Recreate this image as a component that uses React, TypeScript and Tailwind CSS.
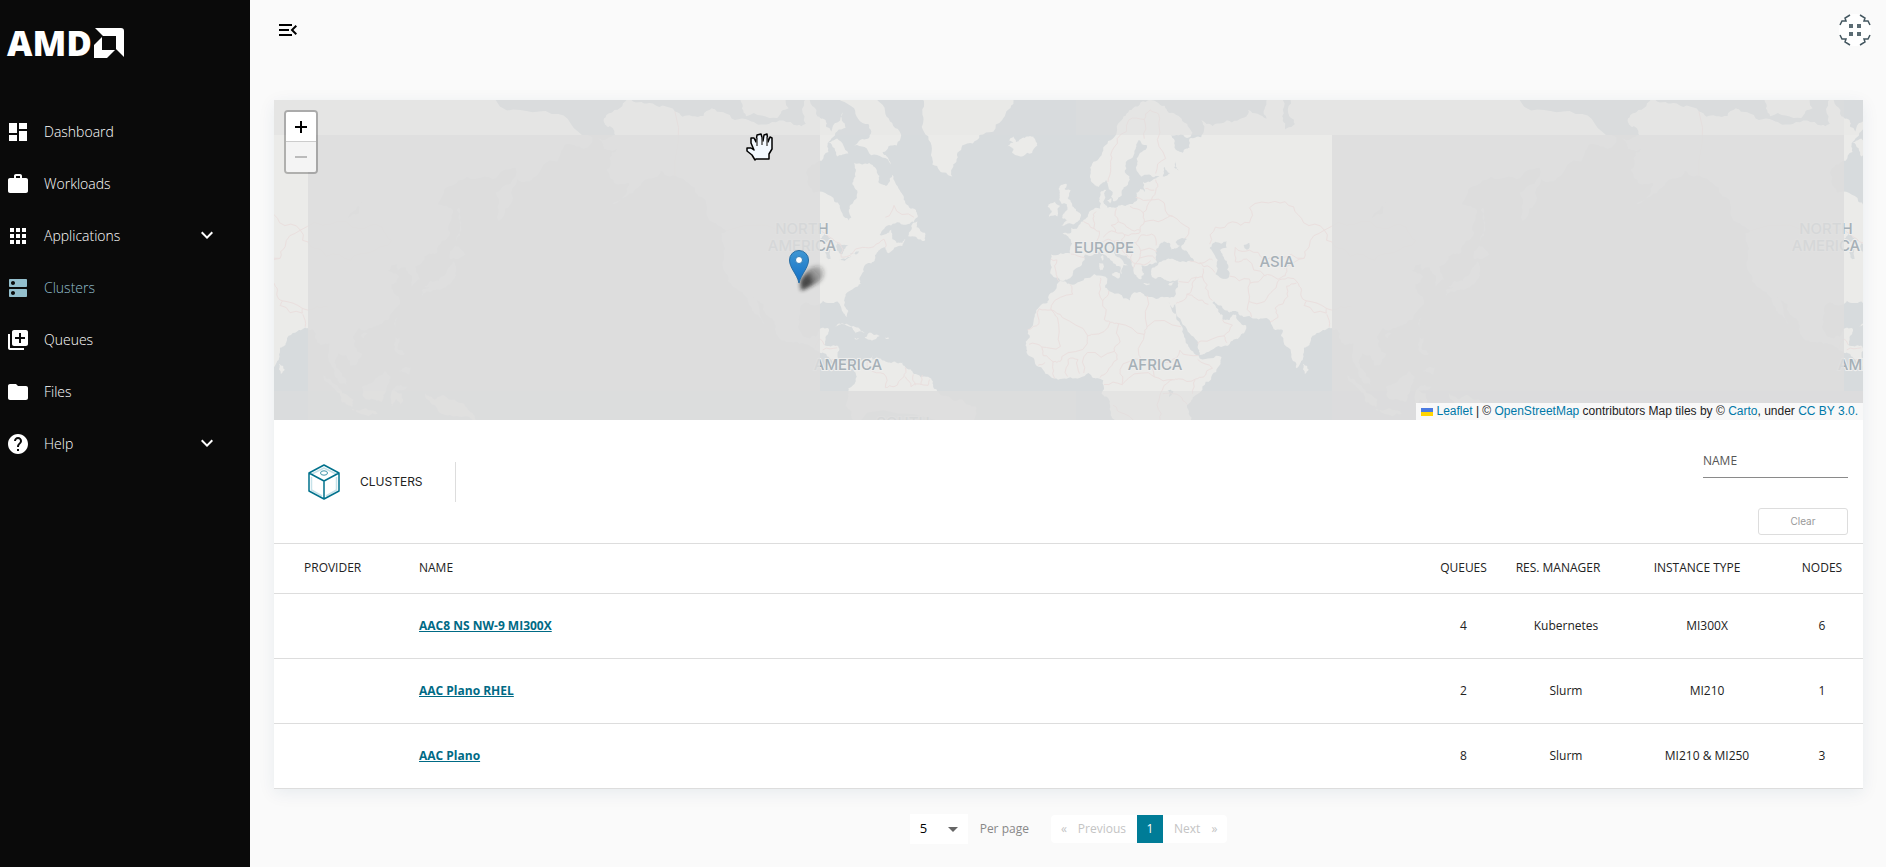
import React, { useState } from 'react';
import { MdApps, MdDashboard, MdDns, MdExpandMore, MdFolder, MdHelp, MdLibraryAdd, MdMenuOpen, MdWork } from 'react-icons/md';

type Point = [number, number];

interface NavItem {
  label: string;
  icon: React.ElementType;
  expandable?: boolean;
}

interface Cluster {
  name: string;
  queues: number;
  manager: string;
  instance: string;
  nodes: number;
}

const navItems: NavItem[] = [
  { label: 'Dashboard', icon: MdDashboard },
  { label: 'Workloads', icon: MdWork },
  { label: 'Applications', icon: MdApps, expandable: true },
  { label: 'Clusters', icon: MdDns },
  { label: 'Queues', icon: MdLibraryAdd },
  { label: 'Files', icon: MdFolder },
  { label: 'Help', icon: MdHelp, expandable: true },
];

const clusters: Cluster[] = [
  { name: 'AAC8 NS NW-9 MI300X', queues: 4, manager: 'Kubernetes', instance: 'MI300X', nodes: 6 },
  { name: 'AAC Plano RHEL', queues: 2, manager: 'Slurm', instance: 'MI210', nodes: 1 },
  { name: 'AAC Plano', queues: 8, manager: 'Slurm', instance: 'MI210 & MI250', nodes: 3 },
];

// Coastlines as "lon,lat lon,lat ..."
const land = [
  // the Americas
  '-168,66 -162,66.5 -163,67.5 -166,68.3 -163,69.5 -157,71.3 -150,70.6 -141,69.6 -135,69 -128,70 -124,69.5 -115,68.5 -108,68 -98,67.8 -95,68 -94,71.5 -91,69 -88,68.5 -86,67 -82,69.5 -81,67.5 -86,66 -87,64 -93,62 -94.5,59 -92.5,57 -85,55.3 -82.3,53 -80,51.3 -79,52 -79.5,54.5 -77,56 -78.5,58.5 -77.5,60 -78,62.3 -74,62.2 -70,61 -69.5,59 -67,58.3 -65.5,59.5 -64.5,60.3 -62,57.5 -60,55 -57,53.8 -55.7,52 -59,50.5 -65,50.2 -69,48 -65,49.2 -64.5,47 -61,46 -60,47 -61,45.3 -65.8,43.5 -67,45 -70,43.7 -70.7,42 -74,40.6 -76,37 -75.7,35.3 -78,34 -81,31.7 -81.3,30 -80,27 -80.4,25.2 -81.8,26.5 -82.7,28.5 -84,30 -89,30.2 -90,29.2 -94,29.6 -97,28 -97.5,25 -97.8,22 -96,19 -94,18.2 -91.5,18.7 -90.4,21 -87,21.5 -88,18 -88.5,16 -84,15.8 -83.3,14 -83.7,11 -82,9 -79.5,9.5 -77.5,8.5 -75.5,10.7 -73,11.3 -71.5,12.3 -71.5,10.9 -68,10.7 -64,10.3 -61,10 -60,8.4 -57,6 -52,5 -50,1 -48,-1 -44,-2.6 -40,-3 -35.2,-5.5 -35,-8 -37,-12 -77,-12 -79,-7 -81,-5 -80,-2 -80,1 -77.5,4 -78,8 -80,7.3 -83,8.3 -86,11 -88,13 -92,14.5 -94.5,16.2 -100,17 -105.5,20 -105.5,22.5 -109,26 -113,31 -114.7,31.5 -111,25.5 -109.5,23 -112,26 -115,29 -117,32.5 -120.6,34.5 -122.5,37.8 -124.3,40.4 -124,46 -124.6,48.3 -123,49 -128,51 -130,55 -134,58 -139,59.7 -146,61 -151,59.5 -154,58 -158,56.3 -163,54.8 -158,57.8 -157,58.8 -162,58.7 -165,61 -164,63 -161,64.5 -166,64.5',
  // Europe and Asia
  '-9,38.7 -8.8,43.2 -2,43.5 -1.3,46 -2.5,47.3 -4.7,48.3 -1.6,48.7 -1.6,49.7 0,49.4 1.7,50.9 4,52 5,53.3 8.5,53.8 8.2,56 8.5,57 10.6,57.6 10.3,56 9.8,54.8 11,54 14,54 18.5,54.7 21,55.3 21.2,57 22.6,57.7 24.3,57.2 23.6,59 28,59.6 30,60 25,60.3 22.8,60 21.3,61 21.3,63 25,65 22,65.8 21,64.5 17.5,62 17.2,60.7 18.8,60 16.7,58 16.2,56.5 14.3,55.5 13,55.4 11.2,58.5 10.5,59.3 8,58.1 5.6,58.9 5,61.5 9,63.5 13,66 16,68.5 20,70 26,71 31,70.3 33,69.4 38,68.2 41,66.8 39,66.1 33,66.6 35,64.4 37.5,63.9 40,64.7 40,66 44,66.2 44,68.5 48,67.7 53,68.5 60,69 60.5,69.8 67,68.7 67,71 70,73 73,72 72.5,69 74,67 72.5,66.3 77,68 75,69 75,72 80,72.5 87,75 105,78 113,74 130,71 140,72.5 160,69.7 178,69.3 190,66.2 187,64.5 180,65 177.5,62.5 170,60 163.5,59.5 162,56 157,51.2 156,57 163,61.5 155,59.5 143,59.3 135.5,54.7 141,53 140,48.5 135.5,44 131,42.8 127.7,40 129.4,36.5 126.5,34.5 126.5,37.5 124.5,39.8 121.5,39 121.5,40.7 118,39 122,37.2 119.3,35 121.8,31.5 121.5,28.5 118.5,24.5 114,22.4 110.3,21 108,21.6 105.8,19 109,13 106.5,9 105,8.8 105,10.5 100.8,13.2 99.3,10 103.4,4 104,1.4 101,3 98.4,8.5 97.6,16.5 94.5,16 92,21 89,21.8 86.8,21 82.3,16.7 80.2,15 80,12 77.5,8 76,11 73,17 72.7,21 70,21 69,22.3 67,24.8 61.5,25.1 57,26.8 54,26.6 51,28.8 48.5,30 48,29.5 50.3,26.5 51.5,25.8 51.6,24.3 54,24.2 56.3,26 57,24 59.8,22.4 58,19.5 55,17.3 52,15.6 45,12.8 43.4,12.7 42.8,15.5 39,21.3 35,28.2 34.7,29.4 34.3,31.2 36,35.5 36,36.7 32,36.1 30.5,36.8 27.5,36.8 26.5,39.3 29,41 33,42 36,41.4 41.5,41.5 39,44 37,45.3 39,47 35,46.3 36.5,45.3 33.5,44.5 33,46 31,46.5 29,45 28,42.5 28.5,41.2 26,40.8 23,40.3 24,38 22.8,36.5 21.3,37.5 19.5,40.5 19,42 14,45 12.3,45.3 13.5,43.5 18.4,40.1 16.8,40.5 16,38 15.7,40 11,42.4 9,44.4 6,43.1 3.2,43.2 3,41.8 -0.3,39.4 -2,36.8 -5.5,36.1 -6.5,37',
  // Africa
  '-6,35.8 -2,35.1 3,36.8 10,37.3 11,36.8 10.2,34.2 15,32.4 19,30.3 20,32.5 23,32.6 29,30.9 34.3,31.3 34.8,29.5 34,27.9 32.6,29.9 33.5,27.8 35.7,24 37.3,20.5 39.5,15.5 43.2,12.3 43.5,11.3 51.2,11.9 50.8,9.5 47.5,4 42,-1.5 39,-5 40.5,-11 40,-14 13,-14 13.5,-10 12,-5 9,-1 9.6,3.8 7,4.4 4.4,6.3 -2,4.8 -7.7,4.4 -13.2,8.5 -16.8,12.5 -17.4,14.7 -16.2,19 -17,21 -14.5,26 -10,29.5 -9.7,31.5 -6.8,34',
  // Greenland, Iceland, Britain, Ireland
  '-73,78 -55,72 -54,69.5 -53.5,67 -51,63.5 -48,61 -43.5,60 -42,62.5 -40,65 -34,66.5 -26,68.5 -22,70.5 -22,78',
  '-24,65.6 -22,66.3 -21,65.5 -18,66.1 -15,66.3 -13.6,65 -18.5,63.4 -22.5,63.9 -22,64.5 -24,64.9 -22,65.4',
  '-5.5,50 -3,51.3 -5,51.8 -4.3,52.8 -3,53.6 -3.2,54.8 -5,54.8 -5.7,56.5 -5.8,58 -3.2,58.6 -4,57.7 -1.9,57.5 -3,56 -1.5,55 0,53.3 1.6,52.7 1,51.3 -3.5,50.4',
  '-10,51.8 -8.5,53.3 -10,54.2 -7.3,55.3 -5.7,54.5 -6.4,52.2',
  // Canadian islands
  '-59,47.7 -57.3,50.8 -55.5,51.5 -56,49.8 -53,48.5 -53,46.8 -55.5,47',
  '-65,62 -72,63.5 -78,65 -73,66 -73,68 -78,70 -88,71 -89,74 -80,74 -72,71.5 -67,69.3 -62,67 -63,65 -68,64 -66,63',
  '-116,69 -105,68.8 -101,70 -105,73 -115,73.3 -118,71',
  '-125,71.5 -119,71.5 -117,74 -125,74',
  '-87,65.5 -84,66 -80,63.8 -84,63.3',
  // Caribbean
  '-84.8,22 -82,23.1 -77,21.8 -74.3,20.2 -77.5,19.9 -78.5,21.5',
  '-74.3,18.5 -73,19.9 -69,19 -71,17.8',
  '-78,18.4 -76.3,18.1 -77.5,17.8',
  '-67.2,18.4 -65.7,18.3 -66.5,18',
  // Mediterranean
  '8.5,39 8.3,41 9.6,40.8 9.5,39.2', '8.7,42.5 9.4,43 9.3,41.5', '12.5,38 15.5,38.2 15.1,36.8', '23.7,35.5 26.2,35.2 24.5,34.9', '32.4,35 34.4,35.6 33.5,34.7', '11,55.6 12.5,55.9 12,54.9',
  // Asia and Pacific
  '79.8,9.5 81.8,7.5 80.5,6 79.8,7.5',
  '130,31.5 130,33.5 133,34.2 131,34.5 136,36 137,37.3 140,40 141,41.4 142,39.5 140.7,36 139,34.7 136,33.6 134,33.5',
  '140,42 141.7,45.4 145.3,43.3 141,42.3',
  '142,46.5 142.3,53.5 143.2,54 143.5,49.5',
  '95.3,5.5 98,4 104,-1.5 106,-3 105.6,-5.8 102,-4 98.5,1.5',
  '109,1.5 113,3.2 117,7 119,5 117.5,0.8 116,-3.8 111,-3',
  '105.3,-6.5 108.5,-6.7 112.5,-6.8 114.5,-8 108,-7.8',
  '119.5,-5.5 119,-2.5 120.5,1 125,1.5 120.5,0.3 123,-0.9 122.5,-4.7 121,-2.8',
  '120.2,16 120.7,18.4 122.2,18.2 121.5,14.5 124,13 123.8,12.7 120.6,14',
  '122,7 124.5,8.5 126.3,8.3 125.5,5.8',
  '131,-0.8 134.5,-3 138,-1.7 145,-4.5 148,-8 150.5,-10.5 143,-9 138,-8.3 133,-4',
  '121.5,25 120.2,23 120.9,22', '108.7,19.2 110.8,20 109.5,18.3',
];

const lakes = [
  '47,44.8 49,46.4 53,46.5 53,45 50.5,44.4 53,41.5 53.8,37 51,36.8 49,38 49.5,40.5',
  '59,45.5 61,46 60,44.2',
  '-92,46.8 -88,48.8 -84.8,46.7', '-87.8,42.5 -87,45.5 -85.3,45.5 -86.3,42', '-84,46 -80,45.5 -82.3,43.2 -83.5,44', '-83.3,41.7 -79,42.8 -81.5,41.5', '-79.5,43.3 -76.3,44 -77,43.3',
  '30.5,60 31,61.6 33,60.5', '34.5,61.5 35,62.5 36,61', '32,0.3 34.3,0 33,-2.5', '104,51.5 109.5,55.5 108,53',
];

const borders = [
  '-5.8,36 -7,38.5 -6.7,41.8 -8.8,42', '-1.8,43.3 3.1,42.4', '7.5,43.8 7,45.9 8.2,48.9 6.2,49.5 2.6,51.1', '7,45.9 10.5,46.8 13.7,46.5 13.5,45.6',
  '6.2,49.5 6,51.8 7,53.2', '14.2,53.9 14.9,51 12.3,50.2 13.8,48.7 9.6,47.5', '14.9,51 18.8,49.5 22.6,49.1 24,51 23.6,53 19,54.3', '13.8,48.7 17,48.1 22.2,48.4 22.6,49.1',
  '17,48.1 16,46.8 18.8,45.9 21,46.2 22.9,48 26.6,48.2 28.2,45.5', '21,46.2 22.7,44.2 28.5,43.8', '22.7,44.2 22.4,42.3 28,42', '22.4,42.3 21,40.8 26.3,41.6', '13.7,46.5 16,46.3 19,44.9 19.2,42.5 21,40.8 20,39.7', '15.8,45.2 18.5,42.5',
  '24,51 30.5,51.4 34,52.2 39.8,49.6 38.3,47.2', '23.6,53 26.5,55.6 31,55 31.5,53.3 34,52.2', '21,56.1 26.5,55.6 28.2,57.8 28,59.4', '24.4,57.8 27.5,57.5',
  '11.2,59 12.2,61.5 12.2,63.6 14.5,66 18.5,68.5 24,68.6 26,69.8 29,69.3', '24,66 24,68.6', '28,60.5 31.5,63 29.5,66.8 29,69.3',
  '47,45.8 49,49.8 55,51 61,50.8 61,54 70,55.3 76.5,54.2 80,50.8 87.3,49.1', '87.3,49.1 82,45.2 80.2,42.2 74,40 73.5,37.5 71,36.5 66,37.5 61.2,35.5 61,36.6 54,37.4',
  '56,41.3 56,45 61,44.3 66,42 71,42.5 80.2,42.2', '56,41.3 60,42 66.5,37.4', '67,41 70.5,40.2 73.5,39.5', '61.2,35.5 60.8,30 61.7,25.2', '60.8,30 66.3,30 69.5,33.5 71.5,36.4 75.5,36.8 78.5,34.5 79,32 81,30.2 88,27.9 92,27.8 97,28.3',
  '68.2,23.7 71,25 70,28 74.5,31.5 74,34.5 77.5,35.4', '81,30.2 80.2,28.8 88,26.4 88,27.9', '88.2,26 89,22', '87.3,49.1 91,45.2 96.5,42.7 105,41.7 111.5,43.6 119.5,46.7 116,49.8 108,49.5 98,50.5 87.3,49.1',
  '43.5,41.2 45,40 48.8,38.4', '44.7,39.5 44.5,37.1 46,35 45.5,34 48,30.3', '36.1,35.9 42.3,37.1 44.5,37.1', '42.3,37.1 41,34.4 39,32.2 42,31 46.5,29.1', '39,32.2 37,30 35.2,29.4', '51.5,24.3 55,22.6 52,19 44,17.3 42.8,16.4', '52,19 53,16.7', '40,41.5 46.5,41.8 48,41.8',
  '-2,35 -1.2,32.2 -8.7,28.7 -8.7,27.4 -4.8,25 4,19.2 6,19.5 12,23.5 10,24.5 9.4,30.2 8.3,35 8.6,36.9', '9.4,30.2 11.5,33.1', '12,23.5 15,23 24,19.5 25,22 25,31.7', '25,22 37,22', '-8.7,27.4 -13,27.7', '-13,27.7 -13,23 -17,21',
  '-8.7,27.4 -6.5,25 -5.5,15.5 -12,15.3 -16.5,16.2', '4,19.2 4,16.5 -5,12 -5.5,10.4 -8,10.2 -11.5,12.3 -12,15.3', '15,23 15.5,17 13.5,13.8 4,13.4 2.7,6.3', '-3,5.1 -2.8,11 0.7,11 1.2,6.1', '-7.5,4.4 -8.2,8 -8,10.2', '-13.3,9 -11,10', '13.5,13.8 14.5,11 11,6.7 8.5,4.7', '24,19.5 22,13 22.8,11 15.5,7.5 16.2,2.2', '22.8,11 27.5,5 34,4 36,4.3 42,4.2 45,5 48,8 42.8,11', '24,9 33,10 36.5,14.2 43,12.4', '9.8,2.3 16.2,2.2 18.5,4.5 27.5,5', '34,4 31,2 29.5,-1.5 30,-8 28.7,-12', '30.5,-1 34,-1 37.7,-3.5 39.2,-4.7', '41.9,4 41,-1', '13,-5 17,-8 24,-11',
  '-73,11.2 -72.5,7.5 -67.5,6 -67,1.2 -64,1.5 -60.5,5 -60,8.2', '-60,5 -58,1.5 -52,2 -51.5,4', '-57.2,5.8 -56.5,2', '-54,5.6 -54.5,2.3', '-95,49 -88,48.2 -83,46 -82.5,42.5 -79,43.2 -75,45 -71,45.2 -67.5,47 -67,45', '-123,49 -95,49', '-141,60 -141,69.6', '-67,52 -64,54.5 -57,52', '-88.5,16 -90.5,17.8 -92,14.6', '-89,14.3 -84,15', '-85.7,11 -83.7,11',
];

const parse = (s: string): Point[] => s.split(' ').map((p) => p.split(',').map(Number) as Point);

// Web mercator, one world is 1024 wide at zoom 2
const project = ([lon, lat]: Point): Point => [
  802 + (lon * 1024) / 360,
  291 - (512 / Math.PI) * Math.log(Math.tan(Math.PI / 4 + (lat * Math.PI) / 360)),
];

const roughen = (points: Point[], passes: number): Point[] => {
  let pts = points;
  for (let n = 0; n < passes; n++) {
    const next: Point[] = [];
    for (let i = 0; i < pts.length - 1; i++) {
      const [ax, ay] = pts[i];
      const [bx, by] = pts[i + 1];
      const h = Math.sin(ax * 12.9 + by * 78.2) * 437.5;
      const k = (h - Math.floor(h) - 0.5) * 0.4;
      next.push(pts[i], [(ax + bx) / 2 + (by - ay) * k, (ay + by) / 2 - (bx - ax) * k]);
    }
    next.push(pts[pts.length - 1]);
    pts = next;
  }
  return pts;
};

const toPath = (s: string, closed: boolean) => {
  const base = parse(s).map(project);
  const pts = roughen(closed ? [...base, base[0]] : base, closed ? 3 : 2);
  return 'M' + pts.map(([x, y]) => `${x.toFixed(1)} ${y.toFixed(1)}`).join('L') + (closed ? 'Z' : '');
};

const landPath = land.map((s) => toPath(s, true)).join('');
const lakePath = lakes.map((s) => toPath(s, true)).join('');
const borderPath = borders.map((s) => toPath(s, false)).join('');

const labels = [
  { text: 'NORTH', x: 528, y: 134 },
  { text: 'AMERICA', x: 528, y: 151 },
  { text: 'AMERICA', x: 574, y: 270 },
  { text: 'SOUTH', x: 629, y: 328 },
  { text: 'EUROPE', x: 830, y: 153 },
  { text: 'ASIA', x: 1003, y: 167 },
  { text: 'AFRICA', x: 881, y: 270 },
];

// Tiles that are still fading in: x, y, width, height, opacity
const fadingTiles = [
  [0, 0, 546, 35, 0.42],
  [546, 0, 256, 35, 0.15],
  [802, 0, 768, 35, 0.42],
  [1570, 0, 19, 35, 0.15],
  [34, 35, 512, 256, 0.86],
  [1058, 35, 512, 256, 0.86],
  [0, 291, 34, 29, 0.5],
  [34, 291, 256, 29, 0.82],
  [290, 291, 512, 29, 0.88],
  [802, 291, 256, 29, 0.5],
  [1058, 291, 531, 29, 0.84],
];

const WorldMap = () => (
  <svg className="block w-full h-full" viewBox="0 0 1589 320" preserveAspectRatio="xMidYMid slice" aria-label="World map">
    <defs>
      <g id="world">
        <path d={landPath} fill="#ebebe9" />
        <path d={lakePath} fill="#d7dbdd" />
        <path d={borderPath} fill="none" stroke="#eadfde" strokeWidth="1" />
        {labels.map((l, i) => (
          <text key={i} x={l.x} y={l.y} textAnchor="middle" className="font-['Inter',sans-serif] text-[15px] font-medium" fill="#a6b0b7" stroke="#eeeeed" strokeWidth="2" paintOrder="stroke">
            {l.text}
          </text>
        ))}
      </g>
      <linearGradient id="pin" x1="0" y1="0" x2="0" y2="1">
        <stop offset="0" stopColor="#3f97d3" />
        <stop offset="1" stopColor="#126fc6" />
      </linearGradient>
      <linearGradient id="shade" x1="0" y1="1" x2="1" y2="0">
        <stop offset="0" stopColor="#222" stopOpacity="0.85" />
        <stop offset="1" stopColor="#222" stopOpacity="0.15" />
      </linearGradient>
      <filter id="soft" x="-50%" y="-50%" width="200%" height="200%"><feGaussianBlur stdDeviation="2" /></filter>
    </defs>
    <rect width="1589" height="320" fill="#d7dbdd" />
    <use href="#world" x="-1024" />
    <use href="#world" />
    <use href="#world" x="1024" />
    {fadingTiles.map(([x, y, w, h, o]) => (
      <rect key={`${x}-${y}`} x={x} y={y} width={w} height={h} fill="#dddddd" opacity={o} />
    ))}

    {/* Cluster marker */}
    <path d="M527 190L528 179C531 171 538 165 546 166C552 169 551 178 543 183Z" fill="url(#shade)" filter="url(#soft)" />
    <path d="M528 190L526 180L536 173L538 184Z" fill="#333" opacity="0.6" filter="url(#soft)" />
    <path d="M525 183C523 174 515.5 168 515.5 160A9.5 9.5 0 0 1 534.5 160C534.5 168 527 174 525 183Z" fill="url(#pin)" stroke="#2a6fa5" />
    <circle cx="525" cy="160" r="3.5" fill="#fff" stroke="#2f7cb5" />

    {/* Drag hand */}
    <path d="M481 60L478 55L473 51V48H477L480 50L477 43V38H480L482 42L483 35L487 34L489 41L490 35L493 34L494 42L496 37L498 38V49L495 54V59H482Z" fill="#f3f9ff" stroke="#000" strokeWidth="1.5" strokeLinejoin="round" />
    <path d="M483 38V46M488 37V45M493 37V46" stroke="#555" strokeWidth="1.5" fill="none" />
  </svg>
);

const Logo = () => (
  <div className="flex items-center text-white h-[30px]">
    <span className="font-['Open_Sans',sans-serif] font-extrabold text-[35px] leading-[30px]">AMD</span>
    <svg className="ml-0.5 size-[30px]" viewBox="0 0 30 30" fill="currentColor">
      <path d="M1 0H27Q30 0 30 3V29L22 21V8H9Z" />
      <path d="M8 9V22H21L13 30H0V17Z" />
    </svg>
  </div>
);

const Sidebar = () => (
  <aside className="w-[250px] shrink-0 bg-[#0a0a0a] pt-7">
    <div className="pl-[7px]"><Logo /></div>
    <nav className="mt-12">
      {navItems.map(({ label, icon: Icon, expandable }) => (
        <a key={label} href="#" className={`flex items-center h-[52px] pl-1.5 pr-[31px] text-[14px] font-light ${label === 'Clusters' ? 'text-[#93bfcd]' : 'text-white'}`}>
          <Icon className="size-6 mr-3.5" />
          <span className="grow pb-0.5">{label}</span>
          {expandable && <MdExpandMore className="size-6 mb-0.5" stroke="currentColor" />}
        </a>
      ))}
    </nav>
  </aside>
);

const CubeIcon = () => (
  <svg className="w-8 h-9" viewBox="0 0 32 36" fill="none" strokeLinejoin="round">
    <path d="M4 10L16 4L28 10M28.5 13V26L18 32M3.5 13V26L14 32" stroke="#c6e2e9" strokeWidth="1.5" />
    <path d="M16 1L31 9V27L16 35L1 27V9ZM1 9L16 17L31 9M16 17V35" stroke="#00718c" strokeWidth="1.5" />
    <ellipse cx="16" cy="9" rx="3.5" ry="2.2" stroke="#3c93a8" />
  </svg>
);

const App = () => {
  const [name, setName] = useState('');
  const [perPage, setPerPage] = useState('5');

  return (
    <div className="flex min-h-screen bg-[#fafafa] font-['Open_Sans',sans-serif] text-[12px] text-[#222]">
      <Sidebar />

      <main className="grow min-w-0 pl-6 pr-[23px]">
        <header className="flex items-start justify-between h-[100px] pt-3.5 pl-0.5">
          <button aria-label="Toggle menu" className="mt-1 text-black"><MdMenuOpen className="size-6" /></button>
          <button aria-label="Apps" className="-mr-2">
            <svg className="size-8" viewBox="0 0 32 32">
              <circle cx="16" cy="16" r="16" fill="#fff" />
              <g fill="#5b6c74">
                <rect x="10" y="10" width="4" height="4" /><rect x="18" y="10" width="4" height="4" />
                <rect x="10" y="18" width="4" height="4" /><rect x="18" y="18" width="4" height="4" />
              </g>
              <g fill="none" stroke="#43565f" strokeWidth="1.5">
                <path d="M11 1L6 4L7 7L3 7L1 11M21 1L26 4L25 7L29 7L31 11M11 31L6 28L7 25L3 25L1 21M21 31L26 28L25 25L29 25L31 21" />
              </g>
            </svg>
          </button>
        </header>

        <section className="bg-white shadow-[0_4px_16px_rgba(10,61,98,0.08)]">
          <div className="relative h-80 overflow-hidden">
            <WorldMap />
            <div className="absolute top-2.5 left-2.5 w-[34px] rounded border-2 border-black/25 bg-clip-padding overflow-hidden">
              <button aria-label="Zoom in" className="flex items-center justify-center w-full h-[30px] bg-white border-b border-[#ccc] text-black">
                <svg className="size-3" viewBox="0 0 12 12"><path d="M6 0V12M0 6H12" stroke="currentColor" strokeWidth="2" /></svg>
              </button>
              <button aria-label="Zoom out" disabled className="flex items-center justify-center w-full h-[30px] bg-[#f4f4f4] text-[#bbb]">
                <svg className="size-3" viewBox="0 0 12 12"><path d="M0 6H12" stroke="currentColor" strokeWidth="2" /></svg>
              </button>
            </div>
            <div className="absolute right-0 bottom-0 h-[17px] px-[5px] bg-white/80 font-['Liberation_Sans',sans-serif] leading-[17px] whitespace-nowrap text-[#222]">
              <a href="#" className="text-[#0078a8]">
                <svg className="inline-block w-3 h-2 mr-1" viewBox="0 0 12 8"><path fill="#4c7be1" d="M0 0h12v4H0z" /><path fill="#ffd500" d="M0 4h12v4H0z" /></svg>
                Leaflet
              </a>
              {' | © '}<a href="#" className="text-[#0078a8]">OpenStreetMap</a>
              {' contributors Map tiles by © '}<a href="#" className="text-[#0078a8]">Carto</a>
              {', under '}<a href="#" className="text-[#0078a8]">CC BY 3.0.</a>
            </div>
          </div>

          <div className="flex justify-between h-[123px] pl-[34px] pr-[15px]">
            <div className="flex items-center">
              <CubeIcon />
              <h1 className="ml-5 mr-8 font-['Inter',sans-serif] text-[12px]">CLUSTERS</h1>
              <div className="h-10 border-l border-[#ddd]" />
            </div>
            <div className="flex flex-col items-end pt-8">
              <input
                type="text"
                aria-label="Name"
                placeholder="NAME"
                value={name}
                onChange={(e) => setName(e.target.value)}
                className="w-[145px] h-[26px] pb-2 border-b border-[#8a8a8a] bg-transparent outline-none placeholder:text-[#555]"
              />
              <button onClick={() => setName('')} className="mt-[30px] w-[90px] h-[27px] rounded-[3px] border border-[#ddd] font-['Inter',sans-serif] text-[10px] text-[#999]">
                Clear
              </button>
            </div>
          </div>

          <table className="w-full table-fixed text-center border-t border-[#ddd]">
            <thead>
              <tr className="h-[50px] border-b border-[#ddd]">
                <th className="w-[145px] pl-[30px] pb-0.5 text-left font-normal">PROVIDER</th>
                <th className="pb-0.5 text-left font-normal">NAME</th>
                <th className="w-[71px] pb-0.5 font-normal">QUEUES</th>
                <th className="w-[134px] pb-0.5 pr-4 font-normal">RES. MANAGER</th>
                <th className="w-[148px] pb-0.5 pr-5 font-normal">INSTANCE TYPE</th>
                <th className="w-[82px] pb-0.5 font-normal">NODES</th>
              </tr>
            </thead>
            <tbody>
              {clusters.map((c) => (
                <tr key={c.name} className="h-[65px] border-b border-[#ddd]">
                  <td />
                  <td className="text-left"><a href="#" className="font-bold text-[#006a85] underline">{c.name}</a></td>
                  <td>{c.queues}</td>
                  <td>{c.manager}</td>
                  <td>{c.instance}</td>
                  <td>{c.nodes}</td>
                </tr>
              ))}
            </tbody>
          </table>
        </section>

        <footer className="flex items-center justify-center h-20">
          <div className="relative">
            <select aria-label="Per page" value={perPage} onChange={(e) => setPerPage(e.target.value)} className="w-[58px] h-[30px] pl-2.5 appearance-none bg-white text-[13px] text-black">
              <option>5</option>
              <option>10</option>
              <option>20</option>
            </select>
            <svg className="absolute right-2.5 top-[13px] w-2.5 h-[5px] pointer-events-none" viewBox="0 0 10 5"><path d="M0 0H10L5 5Z" fill="#666" /></svg>
          </div>
          <span className="ml-3 text-[#888]">Per page</span>
          <div className="flex items-center ml-[22px] h-7 rounded bg-white text-[#c4c4c4]">
            <button disabled className="pl-2.5 pr-[11px]"><span className="mr-[11px]">«</span>Previous</button>
            <button className="w-[26px] h-7 bg-[#007c97] text-white">1</button>
            <button disabled className="pl-[11px] pr-2.5">Next<span className="ml-[11px]">»</span></button>
          </div>
        </footer>
      </main>
    </div>
  );
};

export default App;
